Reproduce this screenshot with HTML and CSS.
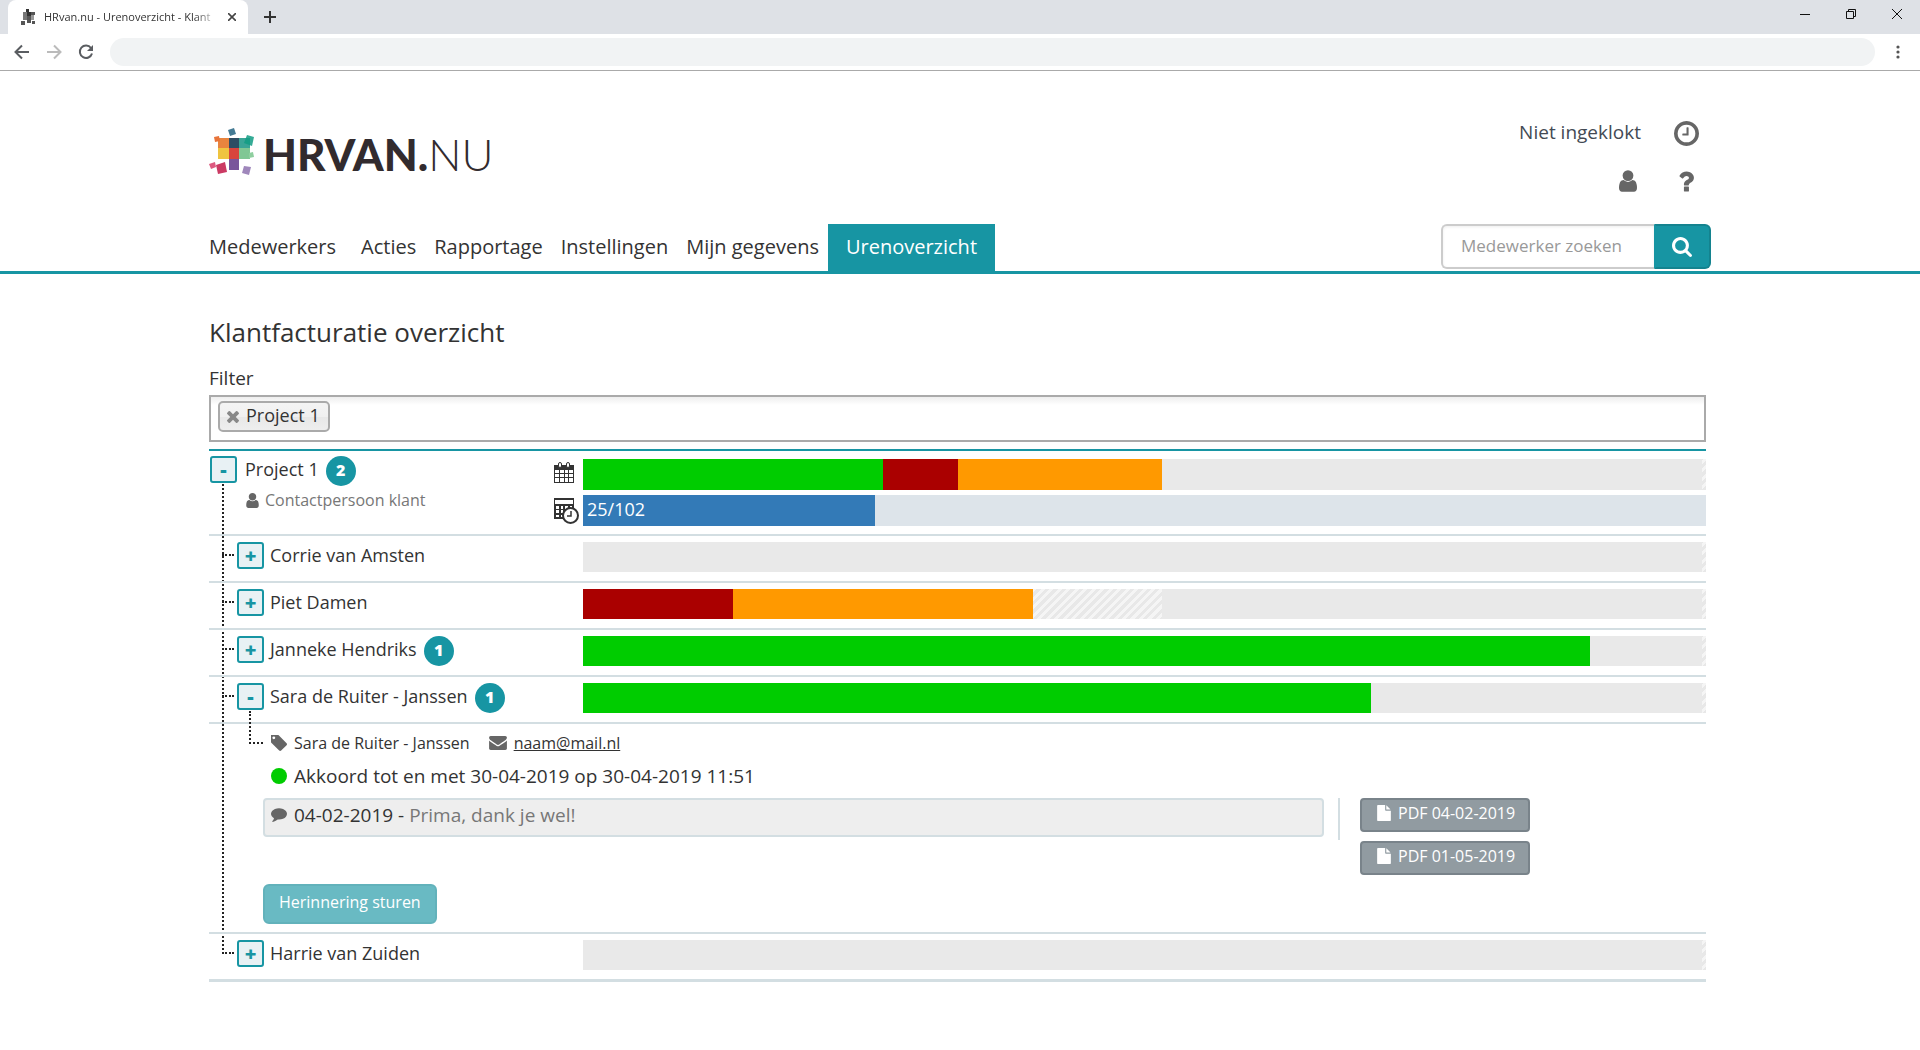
FILE: index.html
```
<!DOCTYPE html>
<html lang="nl">
<head>
<meta charset="utf-8">
<meta name="viewport" content="width=device-width, initial-scale=1">
<title>HRvan.nu - Urenoverzicht - Klantfacturatie</title>
<link rel="stylesheet" href="styles.css">
</head>
<body>
<svg class="sprite" aria-hidden="true">
  <symbol id="i-search" viewBox="64 128 1664 1664"><path d="M1216 832q0-185-131.500-316.500t-316.500-131.500-316.500 131.500-131.500 316.500 131.500 316.500 316.500 131.500 316.500-131.500 131.500-316.500zm512 832q0 52-38 90t-90 38q-54 0-90-38l-343-342q-179 124-399 124-143 0-273.500-55.500t-225-150-150-225-55.500-273.500 55.500-273.500 150-225 225-150 273.500-55.500 273.500 55.500 225 150 150 225 55.500 273.500q0 220-124 399l343 343q37 37 37 90z"/></symbol>
  <symbol id="i-user" viewBox="256 128 1280 1536"><path d="M1536 1399q0 109-62.500 187t-150.500 78h-854q-88 0-150.500-78t-62.500-187q0-85 8.500-160.500t31.500-152 58.500-131 94-89 134.500-34.500q131 128 313 128t313-128q76 0 134.500 34.500t94 89 58.500 131 31.500 152 8.500 160.500zm-256-887q0 159-112.500 271.500t-271.500 112.500-271.500-112.500-112.500-271.500 112.500-271.500 271.500-112.500 271.500 112.500 112.500 271.500z"/></symbol>
  <symbol id="i-clock" viewBox="128 128 1536 1536"><path d="M1024 544v448q0 14-9 23t-23 9h-320q-14 0-23-9t-9-23v-64q0-14 9-23t23-9h224v-352q0-14 9-23t23-9h64q14 0 23 9t9 23zm416 352q0-148-73-273t-198-198-273-73-273 73-198 198-73 273 73 273 198 198 273 73 273-73 198-198 73-273zm224 0q0 209-103 385.500t-279.500 279.500-385.500 103-385.500-103-279.500-279.500-103-385.500 103-385.500 279.500-279.500 385.500-103 385.500 103 279.500 279.500 103 385.500z"/></symbol>
  <symbol id="i-question" viewBox="390 256 1020 1280"><path d="M1088 1256v240q0 16-12 28t-28 12h-240q-16 0-28-12t-12-28v-240q0-16 12-28t28-12h240q16 0 28 12t12 28zm316-600q0 54-15.500 101t-35 76.500-55 59.500-57.500 43.500-61 35.500q-41 23-68.500 65t-27.500 67q0 17-12 32.500t-28 15.500h-240q-15 0-25.500-18.500t-10.500-37.500v-45q0-83 65-156.500t143-108.500q59-27 84-56t25-76q0-42-46.500-74t-107.500-32q-65 0-108 29-35 25-107 115-13 16-31 16-12 0-25-8l-164-125q-13-10-15.500-25t5.500-28q160-266 464-266 80 0 161 31t146 83 106 127.500 41 158.500z"/></symbol>
  <symbol id="i-comment" viewBox="0 256 1792 1536"><path d="M1792 896q0 174-120 321.500t-326 233-450 85.500q-70 0-145-8-198 175-460 242-49 14-114 22-17 2-30.500-9t-17.500-29v-1q-3-4-.5-12t2-10 4.500-9.500l6-9 7-8.500 8-9q7-8 31-34.500t34.500-38 31-39.500 32.500-51 27-59 26-76q-157-89-247.500-220t-90.500-281q0-174 120-321.500t326-233 450-85.500 450 85.500 326 233 120 321.500z"/></symbol>
  <symbol id="i-envelope" viewBox="0 256 1792 1408"><path d="M1792 710v794q0 66-47 113t-113 47h-1472q-66 0-113-47t-47-113v-794q44 49 101 87 362 246 497 345 57 42 92.500 65.500t94.500 48 110 24.500h2q51 0 110-24.500t94.500-48 92.500-65.500q170-123 498-345 57-39 100-87zm0-294q0 79-49 151t-122 123q-376 261-468 325-10 7-42.500 31t-54 38.500-52 32.500-57.500 27-50 9h-2q-23 0-50-9t-57.500-27-52-32.500-54-38.500-42.500-31q-91-64-262-182.500t-205-142.500q-62-42-117-115.500t-55-136.500q0-78 41.500-130t118.500-52h1472q65 0 112.500 47t47.500 113z"/></symbol>
  <symbol id="i-tag" viewBox="192 192 1451 1451"><path d="M576 448q0-53-37.500-90.500t-90.500-37.500-90.500 37.500-37.500 90.500 37.500 90.500 90.500 37.500 90.500-37.500 37.500-90.500zm1067 576q0 53-37 90l-491 492q-39 37-91 37-53 0-90-37l-715-716q-38-37-64.500-101t-26.500-117v-416q0-52 38-90t90-38h416q53 0 117 26.500t102 64.500l715 714q37 39 37 91z"/></symbol>
  <symbol id="i-file" viewBox="128 0 1536 1792"><path d="M1152 512v-472q22 14 36 28l408 408q14 14 28 36h-472zm-128 32q0 40 28 68t68 28h544v1056q0 40-28 68t-68 28h-1344q-40 0-68-28t-28-68v-1600q0-40 28-68t68-28h800v544z"/></symbol>
  <symbol id="i-times" viewBox="302 366 1188 1188"><path d="M1490 1322q0 40-28 68l-136 136q-28 28-68 28t-68-28l-294-294-294 294q-28 28-68 28t-68-28l-136-136q-28-28-28-68t28-68l294-294-294-294q-28-28-28-68t28-68l136-136q28-28 68-28t68 28l294 294 294-294q28-28 68-28t68 28l136 136q28 28 28 68t-28 68l-294 294 294 294q28 28 28 68z"/></symbol>
</svg>

<div class="browser">
  <div class="tabstrip">
    <div class="tab">
      <svg class="favicon" viewBox="0 0 16 16"><path fill="#777" d="M3 3h4v4H3zM3 7h4v4H3z"/><path fill="#333" d="M7 3h4v4H7zM6 0h3v3H6z"/><path fill="#555" d="M7 7h4v7H7zM11 3h4v3h-4z"/><path fill="#999" d="M11 6h3v5h-3z"/><path fill="#555" d="M1 12h4v4H1zM12 12h3v3h-3z"/></svg>
      <span class="tab-title">HRvan.nu - Urenoverzicht - Klant</span>
      <button class="plain tab-close" aria-label="Tabblad sluiten"><svg width="8" height="8" viewBox="0 0 8 8"><path d="M0 0l8 8M8 0l-8 8" stroke="#444" stroke-width="1.600"/></svg></button>
    </div>
    <button class="plain tab-new" aria-label="Nieuw tabblad"><svg width="12" height="12" viewBox="0 0 12 12"><path d="M6 0v12M0 6h12" stroke="#333" stroke-width="2"/></svg></button>
    <div class="window-controls">
      <button class="plain" aria-label="Minimaliseren"><svg width="10" height="10" viewBox="0 0 10 10"><path d="M0 5.500h10" stroke="#111"/></svg></button>
      <button class="plain" aria-label="Herstellen"><svg width="10" height="10" viewBox="0 0 10 10"><path d="M.5 2.500h7v7h-7zM2.500 2.500v-2h7v7h-2" stroke="#111" fill="none"/></svg></button>
      <button class="plain" aria-label="Sluiten"><svg width="10" height="10" viewBox="0 0 10 10"><path d="M0 0l10 10M10 0l-10 10" stroke="#111"/></svg></button>
    </div>
  </div>
  <div class="toolbar">
    <button class="plain" aria-label="Vorige"><svg width="16" height="16" viewBox="0 0 16 16"><path d="M15 8H2M8 1.500L1.500 8 8 14.500" fill="none" stroke="#5a5d61" stroke-width="2"/></svg></button>
    <button class="plain" aria-label="Volgende"><svg width="16" height="16" viewBox="0 0 16 16"><path d="M1 8h13M8 1.500L14.500 8 8 14.500" fill="none" stroke="#bbb" stroke-width="2"/></svg></button>
    <button class="plain" aria-label="Vernieuwen"><svg width="16" height="16" viewBox="0 0 16 16"><path d="M13 4A6.200 6.200 0 1 0 14 9.500" fill="none" stroke="#5a5d61" stroke-width="2"/><path d="M15 1v6H9z" fill="#5a5d61"/></svg></button>
    <input class="address" type="text" aria-label="Adres">
    <button class="plain menu" aria-label="Menu"><svg width="4" height="14" viewBox="0 0 4 14"><g fill="#555"><circle cx="2" cy="2" r="1.600"/><circle cx="2" cy="7" r="1.600"/><circle cx="2" cy="12" r="1.600"/></g></svg></button>
  </div>
</div>

<header class="site-header">
  <div class="container masthead">
    <a class="logo" href="#" aria-label="HRvan.nu">
      <svg width="46" height="47" viewBox="0 0 46 47">
        <path fill="#e8843e" d="M9 10h11v10H9z"/><path fill="#2d4d63" d="M20 10h10v10H20z"/><path fill="#3aa596" d="M30 10h11v10H30z"/>
        <path fill="#efc440" d="M9 20h11v11H9z"/><path fill="#d8443c" d="M20 20h10v11H20z"/><path fill="#80c794" d="M30 20h11v11H30z"/>
        <path fill="#7a559b" d="M20 31h10v11H20z"/>
        <path fill="#447b94" d="M19 2l6-2 2 6-6 2z"/><path fill="#e8743a" d="M5 9l5-1 1 5-5 1z"/>
        <path fill="#129c84" fill-opacity=".85" d="M38 7l7 2-2 9-8-3z"/><path fill="#8fcf9f" d="M40 25l4-1 1 5-5 1z"/>
        <path fill="#cb3a63" d="M7 37l9-3 2 10-9 2z"/><path fill="#dd5a80" d="M0 36l6-2 1 5-5 2z"/><path fill="#9f87bb" d="M35 38l7 1-2 8-7-2z"/>
      </svg>
      <span class="wordmark"><b>HRVAN.</b>NU</span>
    </a>
    <div class="account">
      <span class="clock-state">Niet ingeklokt</span>
      <button class="plain" aria-label="Inklokken"><svg width="25" height="25"><use href="#i-clock"/></svg></button>
      <button class="plain profile" aria-label="Profiel"><svg width="18" height="22"><use href="#i-user"/></svg></button>
      <button class="plain" aria-label="Help"><svg width="16" height="21"><use href="#i-question"/></svg></button>
    </div>
  </div>
  <div class="nav-bar">
    <div class="container nav-row">
      <nav class="main-nav">
        <a class="first" href="#">Medewerkers</a>
        <a href="#">Acties</a>
        <a href="#">Rapportage</a>
        <a href="#">Instellingen</a>
        <a href="#">Mijn gegevens</a>
        <a class="active" href="#" aria-current="page">Urenoverzicht</a>
      </nav>
      <form class="search" role="search">
        <input type="text" placeholder="Medewerker zoeken" aria-label="Medewerker zoeken">
        <button type="button" aria-label="Zoeken"><svg width="20" height="20"><use href="#i-search"/></svg></button>
      </form>
    </div>
  </div>
</header>

<main class="container page">
  <h1>Klantfacturatie overzicht</h1>
  <label class="filter-label" for="filter">Filter</label>
  <div class="filter">
    <span class="chip"><button class="plain" aria-label="Project 1 verwijderen"><svg width="12" height="12"><use href="#i-times"/></svg></button>Project 1</span>
    <input id="filter" type="text">
  </div>

  <div class="project">
    <div class="row row-project">
      <div class="who">
        <button class="toggle" aria-expanded="true" aria-label="Project 1">-</button>
        <div>
          <div class="name-line"><span>Project 1</span><span class="badge">2</span></div>
          <div class="contact"><svg width="13" height="15"><use href="#i-user"/></svg>Contactpersoon klant</div>
        </div>
      </div>
      <div class="meters">
        <svg width="20" height="25" viewBox="0 0 20 25"><path fill="#333" d="M0 3h20v18H0z"/><path fill="#fff" d="M1 8h4v3H1zM6 8h4v3H6zM11 8h3v3h-3zM15 8h4v3h-4zM1 12h4v3H1zM6 12h4v3H6zM11 12h3v3h-3zM15 12h4v3h-4zM1 16h4v4H1zM6 16h4v4H6zM11 16h3v4h-3zM15 16h4v4h-4z"/><path fill="#fff" stroke="#333" d="M4.500 2a1.500 1.500 0 0 1 3 0v2a1.500 1.500 0 0 1-3 0zM12.500 2a1.500 1.500 0 0 1 3 0v2a1.500 1.500 0 0 1-3 0z"/></svg>
        <div class="bar">
          <i class="ok" style="width:26.7%"></i><i class="bad" style="width:6.7%"></i><i class="wait" style="width:18.2%"></i><i class="rest"></i>
        </div>
        <svg width="25" height="26" viewBox="0 0 25 26"><path fill="#333" d="M0 0h20v21H0z"/><path fill="#fff" d="M1 2h18v4H1zM2 8h3v3H2zM7 8h2v3H7zM11 8h3v3h-3zM16 8h2v3h-2zM2 12h3v3H2zM7 12h2v3H7zM2 17h3v2H2zM7 17h2v2H7z"/><circle cx="16.500" cy="17.500" r="7.500" fill="#fff" stroke="#333" stroke-width="2"/><path d="M17 13v5h-4" fill="none" stroke="#333" stroke-width="1.500"/></svg>
        <div class="bar budget"><i style="width:26%">25/102</i></div>
      </div>
    </div>

    <ul class="people">
      <li>
        <div class="row">
          <div class="who"><button class="toggle" aria-expanded="false" aria-label="Corrie van Amsten">+</button><div class="name-line"><span>Corrie van Amsten</span></div></div>
          <div class="bar"><i class="rest"></i></div>
        </div>
      </li>
      <li>
        <div class="row">
          <div class="who"><button class="toggle" aria-expanded="false" aria-label="Piet Damen">+</button><div class="name-line"><span>Piet Damen</span></div></div>
          <div class="bar"><i class="bad" style="width:13.4%"></i><i class="wait" style="width:26.7%"></i><i style="width:11.5%"></i><i class="rest"></i></div>
        </div>
      </li>
      <li>
        <div class="row">
          <div class="who"><button class="toggle" aria-expanded="false" aria-label="Janneke Hendriks">+</button><div class="name-line"><span>Janneke Hendriks</span><span class="badge">1</span></div></div>
          <div class="bar"><i class="ok" style="width:89.7%"></i><i class="rest"></i></div>
        </div>
      </li>
      <li>
        <div class="row open">
          <div class="who"><button class="toggle" aria-expanded="true" aria-label="Sara de Ruiter - Janssen">-</button><div class="name-line"><span>Sara de Ruiter - Janssen</span><span class="badge">1</span></div></div>
          <div class="bar"><i class="ok" style="width:70.2%"></i><i class="rest"></i></div>
        </div>
        <div class="details">
          <div class="detail-line small">
            <svg width="16" height="16"><use href="#i-tag"/></svg><span>Sara de Ruiter - Janssen</span>
            <svg class="mail-icon" width="18" height="14"><use href="#i-envelope"/></svg><a href="mailto:naam@mail.nl">naam@mail.nl</a>
          </div>
          <div class="detail-line"><span class="dot"></span><span>Akkoord tot en met 30-04-2019 op 30-04-2019 11:51</span></div>
          <div class="feedback">
            <div class="comment"><svg width="16" height="14"><use href="#i-comment"/></svg><span>04-02-2019 - <em>Prima, dank je wel!</em></span></div>
            <div class="files">
              <button class="pdf"><svg width="14" height="16"><use href="#i-file"/></svg>PDF 04-02-2019</button>
              <button class="pdf"><svg width="14" height="16"><use href="#i-file"/></svg>PDF 01-05-2019</button>
            </div>
          </div>
          <button class="remind">Herinnering sturen</button>
        </div>
      </li>
      <li>
        <div class="row">
          <div class="who"><button class="toggle" aria-expanded="false" aria-label="Harrie van Zuiden">+</button><div class="name-line"><span>Harrie van Zuiden</span></div></div>
          <div class="bar"><i class="rest"></i></div>
        </div>
      </li>
    </ul>
  </div>
</main>
</body>
</html>
```
FILE: styles.css
```
:root {
  --teal: #1795a3;
  --line: #d3dee2;
  --text: #333;
  --icon: #666;
}

* { box-sizing: border-box; }

body {
  margin: 0;
  background: #fff;
  color: var(--text);
  font-family: "Open Sans", "Noto Sans", sans-serif;
  font-size: 18px;
  line-height: 26px;
}

button, input { font: inherit; color: inherit; }
button { cursor: pointer; }
svg { display: block; flex: none; fill: currentColor; }
.sprite { display: none; }

.plain {
  display: flex;
  align-items: center;
  justify-content: center;
  padding: 0;
  border: 0;
  background: none;
}

.container {
  max-width: 1502px;
  margin: 0 auto;
}

/* Browser frame */
.tabstrip {
  display: flex;
  height: 34px;
  padding-left: 8px;
  background: #dee1e6;
}

.tab {
  display: flex;
  align-items: center;
  width: 240px;
  padding: 0 12px;
  border-radius: 8px 8px 0 0;
  background: #fff;
}

.favicon { width: 16px; height: 16px; }

.tab-title {
  flex: 1;
  margin: 0 8px;
  white-space: nowrap;
  font-size: 11px;
  line-height: 16px;
  -webkit-mask-image: linear-gradient(to right, #000 85%, transparent);
  mask-image: linear-gradient(to right, #000 85%, transparent);
}

.tab-new { margin: 0 16px; }

.window-controls {
  display: flex;
  width: 138px;
  height: 28px;
  margin-left: auto;
}

.window-controls button { flex: 1; }

.toolbar {
  display: flex;
  align-items: center;
  gap: 16px;
  height: 37px;
  padding: 0 20px 0 14px;
  border-bottom: 1px solid #aaa;
}

.address {
  flex: 1;
  height: 28px;
  border: 0;
  border-radius: 14px;
  background: #f1f3f4;
}

.menu { margin-left: 5px; }

/* Site header */
.masthead {
  display: flex;
  align-items: flex-start;
  justify-content: space-between;
  padding: 38px 0 19px;
}

.logo {
  display: flex;
  gap: 8px;
  margin-top: 19px;
  color: #322b2e;
  text-decoration: none;
}

.wordmark {
  font-family: Lato, sans-serif;
  font-size: 44px;
  font-weight: 300;
  line-height: 52px;
}

.wordmark b { font-weight: 900; }

.account {
  display: grid;
  grid-template-columns: auto 50px;
  grid-auto-rows: 48px;
  column-gap: 20px;
  align-items: center;
  justify-items: center;
  color: var(--icon);
}

.clock-state {
  padding-bottom: 2px;
  color: #434a54;
  font-size: 19px;
}

.profile {
  justify-self: end;
  margin-right: 4px;
}

.nav-bar { border-bottom: 3px solid var(--teal); }

.nav-row {
  display: flex;
  flex-wrap: wrap;
  align-items: flex-start;
  justify-content: space-between;
}

.main-nav { display: flex; }

.main-nav a {
  padding: 0 9px 2px;
  color: var(--text);
  font-size: 20px;
  line-height: 45px;
  text-decoration: none;
}

.main-nav .first {
  padding-left: 0;
  margin-right: 7px;
}

.main-nav .active {
  padding: 0 18px 2px;
  background: var(--teal);
  color: #fff;
}

.search {
  display: flex;
  width: 270px;
  height: 45px;
}

.search input {
  flex: 1;
  min-width: 0;
  padding: 0 18px 2px;
  border: 2px solid #ccc;
  border-right: 0;
  border-radius: 6px 0 0 6px;
  box-shadow: inset 0 1px 3px #0001;
  font-size: 17px;
}

.search input::placeholder { color: #999; }

.search button {
  display: flex;
  align-items: center;
  justify-content: center;
  width: 57px;
  padding: 0 2px 0 0;
  border: 2px solid #14838f;
  border-left-color: var(--teal);
  border-radius: 0 6px 6px 0;
  background: var(--teal);
  color: #fff;
}

/* Page */
.page { padding: 40px 5px 40px 0; }

h1 {
  margin: 0 0 14px;
  font-size: 26px;
  font-weight: 500;
  line-height: 36px;
}

.filter-label {
  display: block;
  margin-bottom: 3px;
  font-size: 19px;
  line-height: 28px;
}

.filter {
  display: flex;
  align-items: flex-start;
  height: 47px;
  padding: 4px 7px;
  border: 2px solid #aaa;
  background: linear-gradient(#eee, #fff 8px);
}

.filter input {
  flex: 1;
  height: 31px;
  border: 0;
  outline: 0;
  background: none;
}

.chip {
  display: flex;
  gap: 7px;
  height: 31px;
  padding: 0 8px 0 7px;
  border: 2px solid #aaa;
  border-radius: 5px;
  background: linear-gradient(#f4f4f4, #f0f0f0 50%, #e8e8e8 52%, #eee);
  line-height: 24px;
}

.chip button { color: #888; }

/* Project tree */
.project {
  position: relative;
  margin-top: 7px;
  border-top: 2px solid var(--teal);
}

.project::before {
  content: "";
  position: absolute;
  top: 33px;
  bottom: 28px;
  left: 13px;
  border-left: 2px dotted #222;
}

.row {
  display: grid;
  grid-template-columns: 374px 1fr;
  align-items: start;
  padding: 6px 0 9px;
  border-bottom: 2px solid var(--line);
}

.row-project {
  grid-template-columns: 345px 1fr;
  padding: 5px 0 8px;
}

.who {
  display: flex;
  gap: 6px;
}

.row-project .who { padding-left: 1px; gap: 8px; }

.toggle {
  flex: none;
  width: 27px;
  height: 27px;
  padding: 0;
  border: 2px solid var(--teal);
  border-radius: 3px;
  background: #e8f1f4;
  color: var(--teal);
  font-size: 20px;
  font-weight: 800;
  line-height: 20px;
}

.name-line {
  display: flex;
  gap: 7px;
  height: 30px;
}

.badge {
  width: 30px;
  height: 30px;
  border-radius: 50%;
  background: var(--teal);
  color: #fff;
  font-size: 16px;
  font-weight: 800;
  line-height: 28px;
  text-align: center;
}

.contact {
  display: flex;
  align-items: center;
  gap: 6px;
  padding: 2px 0 0 1px;
  color: #777;
  font-size: 16px;
  line-height: 24px;
}

.contact svg { color: var(--icon); }

.meters {
  display: grid;
  grid-template-columns: 25px 1fr;
  gap: 5px 4px;
  padding-top: 3px;
  align-items: center;
}

.meters .bar { height: 31px; }

.bar {
  display: flex;
  height: 30px;
  background: repeating-linear-gradient(135deg, #f5f5f5 0 3px, #e8e8e8 3px 6px);
}

.bar i {
  flex: none;
  font-style: normal;
}

.bar .ok { background: #0c0; }
.bar .bad { background: #a00; }
.bar .wait { background: #f90; }

.bar .rest {
  flex: 1;
  margin-right: 4px;
  background: #e9e9e9;
}

.budget { background: #dde4ea; }

.budget i {
  padding-left: 4px;
  background: #337ab7;
  color: #fff;
  font-weight: 500;
  line-height: 28px;
}

.people {
  margin: 0;
  padding: 0;
  list-style: none;
}

.people li { position: relative; }
.people .who { padding-left: 28px; }
.people li:last-child .row { border-bottom-width: 3px; }

.people li::before {
  content: "";
  position: absolute;
  top: 18px;
  left: 13px;
  width: 12px;
  border-top: 2px dotted #222;
}

.details {
  position: relative;
  padding: 7px 0 8px 54px;
  border-bottom: 2px solid var(--line);
}

.details::before {
  content: "";
  position: absolute;
  top: -13px;
  left: 40px;
  width: 12px;
  height: 31px;
  border: 2px dotted #222;
  border-width: 0 0 2px 2px;
}

.detail-line {
  display: flex;
  align-items: center;
  gap: 7px;
  padding-left: 8px;
  margin-bottom: 8px;
  font-size: 19px;
  line-height: 28px;
}

.detail-line.small {
  margin-bottom: 7px;
  font-size: 16px;
  line-height: 24px;
}

.detail-line svg, .comment svg { color: var(--icon); }
.detail-line a { color: inherit; }
.mail-icon { margin-left: 12px; }

.dot {
  width: 16px;
  height: 16px;
  border-radius: 50%;
  background: #0c0;
}

.feedback {
  display: flex;
  align-items: flex-start;
}

.comment {
  display: flex;
  flex: 1;
  align-items: center;
  gap: 7px;
  height: 39px;
  padding: 0 6px 5px;
  border: 2px solid var(--line);
  border-radius: 4px;
  background: #eee;
  font-size: 19px;
}

.comment em {
  color: #777;
  font-style: normal;
}

.feedback::after {
  content: "";
  order: 1;
  width: 2px;
  height: 42px;
  margin: 0 20px 0 14px;
  background: var(--line);
}

.files {
  display: grid;
  order: 2;
  gap: 9px;
  width: 346px;
}

.pdf {
  display: flex;
  align-items: center;
  gap: 7px;
  width: 170px;
  height: 34px;
  padding: 0 0 4px 15px;
  border: 2px solid #79838a;
  border-radius: 4px;
  background: #919ba1;
  color: #fff;
  font-size: 16px;
  white-space: nowrap;
}

.remind {
  display: block;
  height: 40px;
  margin-top: 9px;
  padding: 0 14px 4px;
  border: 2px solid #62b2bb;
  border-radius: 6px;
  background: #69bac3;
  color: #fff;
  font-size: 16px;
  font-weight: 500;
}
```
